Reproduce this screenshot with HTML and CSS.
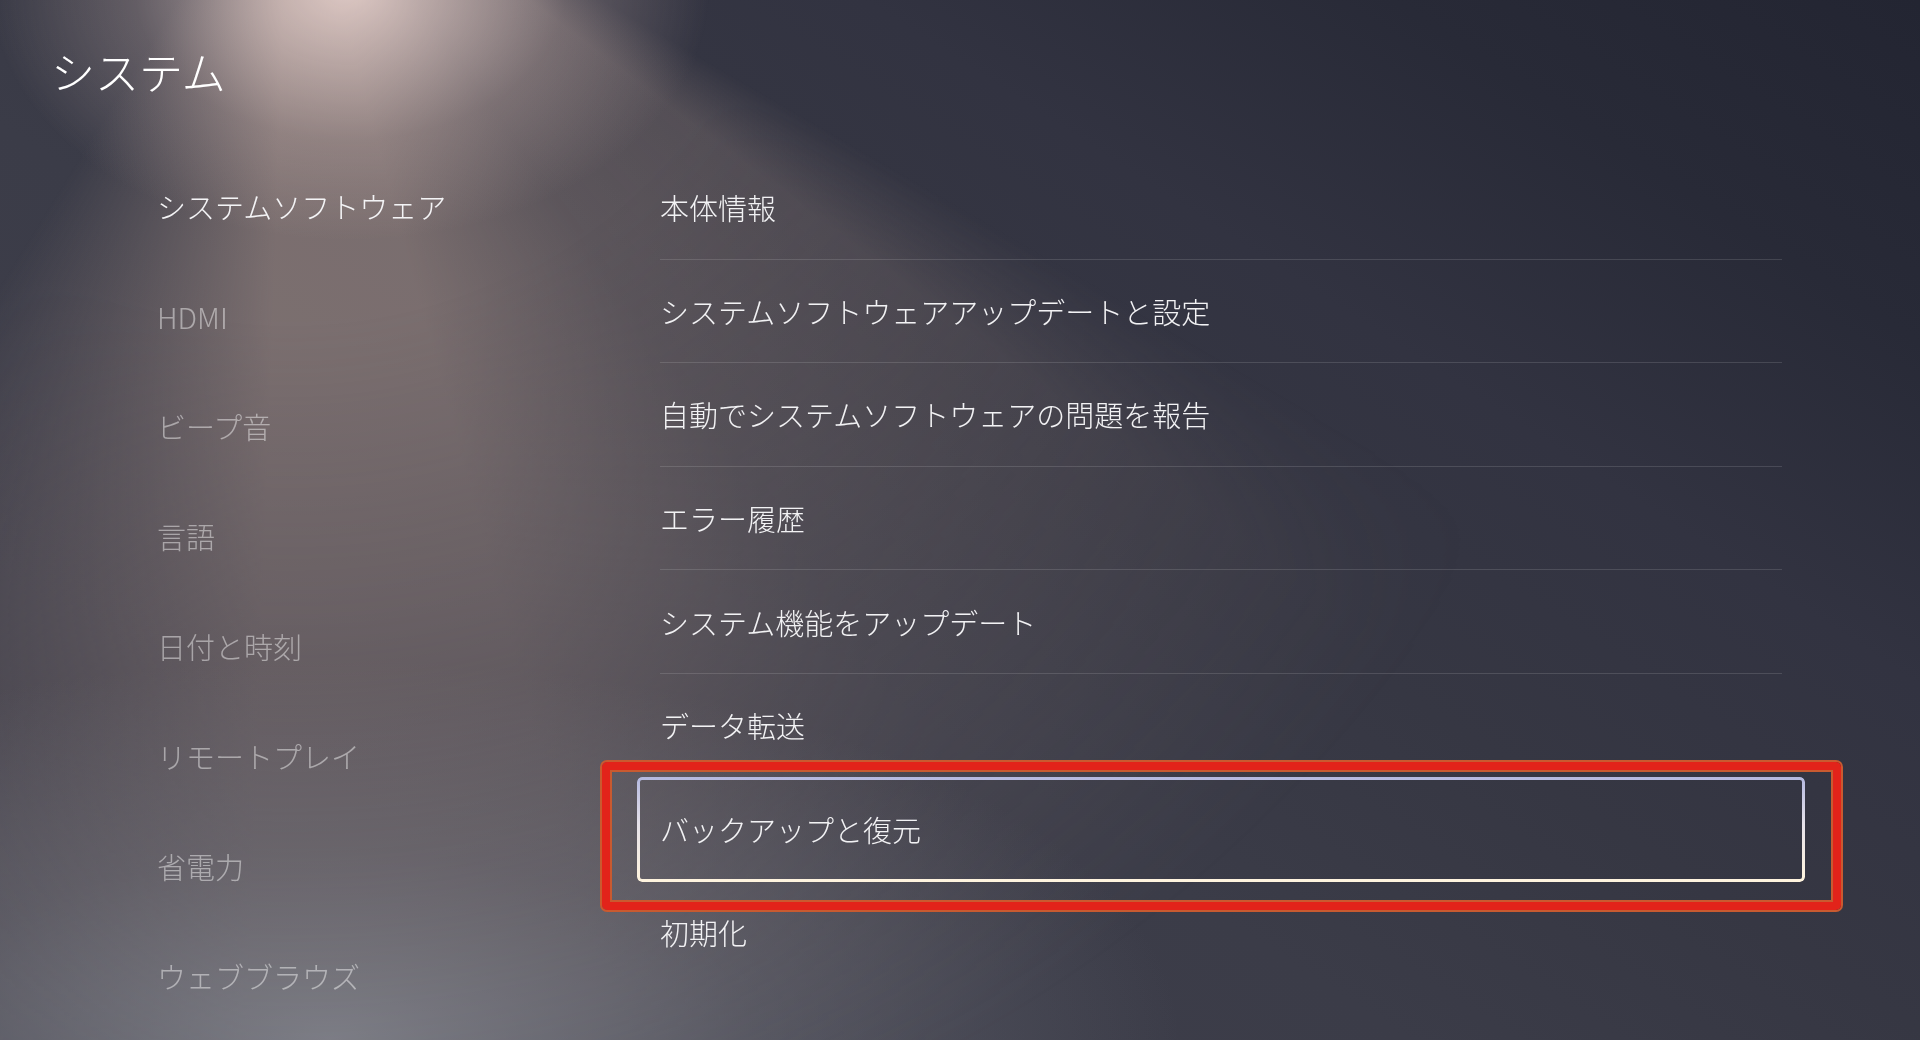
FILE: index.html
```html
<!DOCTYPE html>
<html lang="ja">
<head>
    <meta charset="UTF-8">
    <meta name="viewport" content="width=device-width, initial-scale=1.0">
    <title>システム</title>
    <link rel="stylesheet" href="styles.css">
</head>
<body>
    <div class="screen">
        <h1 class="title">システム</h1>

        <div class="settings">
            <ul class="nav">
                <li class="nav-item active">システムソフトウェア</li>
                <li class="nav-item">HDMI</li>
                <li class="nav-item">ビープ音</li>
                <li class="nav-item">言語</li>
                <li class="nav-item">日付と時刻</li>
                <li class="nav-item">リモートプレイ</li>
                <li class="nav-item">省電力</li>
                <li class="nav-item">ウェブブラウズ</li>
            </ul>

            <ul class="options">
                <li class="option">本体情報</li>
                <li class="option">システムソフトウェアアップデートと設定</li>
                <li class="option">自動でシステムソフトウェアの問題を報告</li>
                <li class="option">エラー履歴</li>
                <li class="option">システム機能をアップデート</li>
                <li class="option">データ転送</li>
                <li class="option focused">
                    バックアップと復元
                    <span class="highlight"></span>
                </li>
                <li class="option">初期化</li>
            </ul>
        </div>
    </div>
</body>
</html>
```

FILE: styles.css
```css
html, body {
    margin: 0;
    height: 100%;
}
body {
    font-family: "Noto Sans CJK JP", "Noto Sans", sans-serif;
    font-weight: 300;
    color: #f2f2f4;
    overflow: hidden;
    background-color: #2a2c39;
    /* floor glow bottom-left, dark navy top-right */
    background-image:
        radial-gradient(ellipse 850px 380px at 330px 1040px, rgba(128, 133, 143, 0.85) 0%, rgba(110, 113, 123, 0.45) 50%, transparent 100%),
        linear-gradient(213deg, #232532 0%, #282a37 15%, #323341 30%, #363743 45%, #3b3c48 60%, #3e3e4a 80%, #403f4a 100%);
}
/* spotlight beam coming down from the top, fading with distance */
body::before {
    content: "";
    position: fixed;
    top: 0;
    left: 0;
    right: 0;
    bottom: 0;
    pointer-events: none;
    background-image:
        radial-gradient(ellipse 360px 250px at 350px -10px, rgba(232, 210, 205, 0.9) 0%, rgba(200, 178, 174, 0.3) 60%, transparent 100%),
        conic-gradient(from 0deg at 290px -180px, transparent 0deg 120deg, rgba(166, 145, 138, 0.28) 127deg, rgba(166, 145, 138, 0.34) 145deg, rgba(166, 145, 138, 0.6) 165deg, rgba(166, 145, 138, 0.6) 182deg, transparent 212deg);
    -webkit-mask-image: radial-gradient(circle at 290px -180px, #000 0, #000 500px, rgba(0, 0, 0, 0.7) 800px, rgba(0, 0, 0, 0.35) 1100px, transparent 1400px);
    mask-image: radial-gradient(circle at 290px -180px, #000 0, #000 500px, rgba(0, 0, 0, 0.7) 800px, rgba(0, 0, 0, 0.35) 1100px, transparent 1400px);
}
ul {
    list-style: none;
    margin: 0;
    padding: 0;
}
.screen {
    position: relative;
    padding: 41px 0 0 51px;
}
.title {
    margin: 0;
    height: 60px;
    line-height: 60px;
    font-size: 44px;
    font-weight: 300;
    color: #fff;
}
.settings {
    display: grid;
    grid-template-columns: 503px 1122px;
    margin: 50px 0 0 106px;
}
.nav-item {
    height: 110px;
    display: flex;
    align-items: center;
    font-size: 29px;
    color: rgba(255, 255, 255, 0.46);
}
.nav-item.active {
    color: #f4f4f6;
}
.options {
    padding-top: 5px;
}
.option {
    position: relative;
    box-sizing: border-box;
    height: 103.6px;
    display: flex;
    align-items: center;
    font-size: 29px;
    color: #f2f2f4;
    border-bottom: 1px solid rgba(255, 255, 255, 0.13);
}
.option:last-child,
.option.focused {
    border-bottom-color: transparent;
}
.option.focused::before {
    content: "";
    position: absolute;
    top: -1px;
    bottom: -2px;
    left: -23px;
    right: -23px;
    padding: 3px;
    border-radius: 5px;
    background: linear-gradient(180deg, #b4b8df 0%, #e6e2ea 45%, #fff4de 100%);
    -webkit-mask: linear-gradient(#000 0 0) content-box, linear-gradient(#000 0 0);
    -webkit-mask-composite: xor;
    mask-composite: exclude;
}
.highlight {
    position: absolute;
    top: -16px;
    bottom: -30px;
    left: -58px;
    right: -59px;
    border: 8px solid #e2231a;
    border-radius: 5px;
    box-shadow: 0 0 0 2px #c95a30, inset 0 0 0 2px #c95a30;
}
```
